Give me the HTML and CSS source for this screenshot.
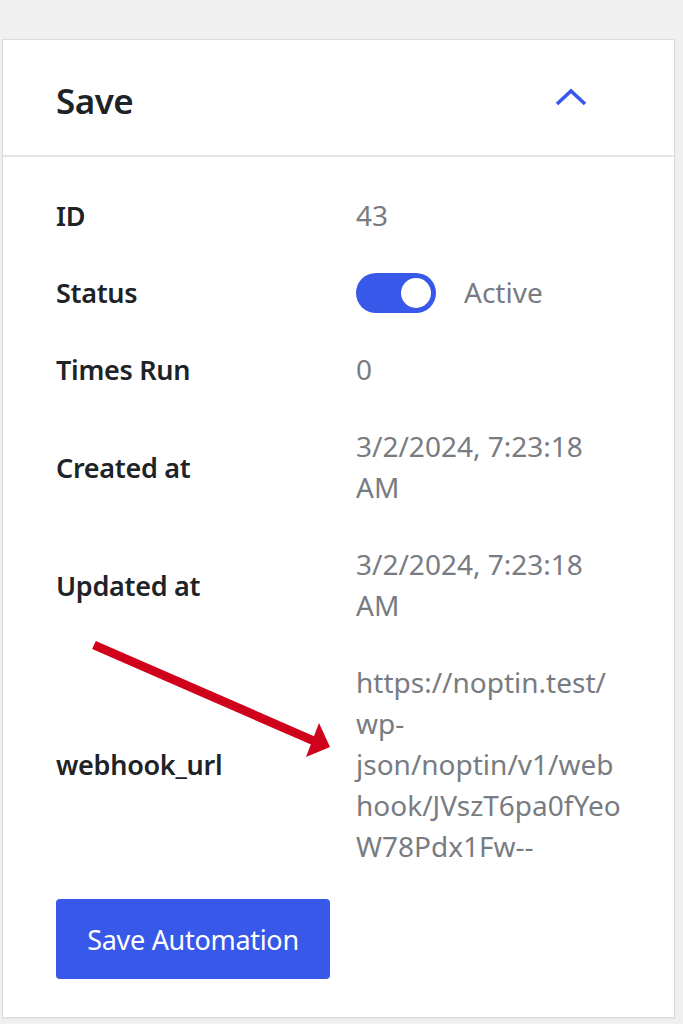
FILE: index.html
```html
<!DOCTYPE html>
<html>
<head>
<meta charset="utf-8">
<link rel="stylesheet" href="styles.css">
</head>
<body>
<div class="card">
  <div class="card-header">
    <h2 class="title">Save</h2>
    <svg class="chevron" width="34" height="22" viewBox="0 0 34 22"><path d="M3 18 L17 5 L31 18" fill="none" stroke="#3858e9" stroke-width="3.6" stroke-linejoin="miter"/></svg>
  </div>
  <div class="card-body">
    <div class="rows">
      <div class="label">ID</div><div class="value">43</div>
      <div class="label">Status</div>
      <div class="value status"><span class="toggle"><span class="knob"></span></span><span>Active</span></div>
      <div class="label">Times Run</div><div class="value">0</div>
      <div class="label">Created at</div><div class="value">3/2/2024, 7:23:18 AM</div>
      <div class="label">Updated at</div><div class="value">3/2/2024, 7:23:18 AM</div>
      <div class="label">webhook_url</div><div class="value url">https://noptin.test/wp-json/noptin/v1/webhook/JVszT6pa0fYeoW78Pdx1Fw--</div>
    </div>
    <button class="save-btn">Save Automation</button>
  </div>
  <svg class="arrow" width="260" height="130" viewBox="0 0 260 130">
    <line x1="2" y1="5" x2="222" y2="101" stroke="#d0021b" stroke-width="9"/>
    <polygon points="227,83 238,107 214,117" fill="#d0021b"/>
  </svg>
</div>
</body>
</html>
```
FILE: styles.css
```css
html, body { margin: 0; padding: 0; }
body {
  background: #f0f0f1;
  font-family: "Noto Sans", "Open Sans", sans-serif;
  width: 683px;
  height: 1024px;
  padding-top: 39px;
  box-sizing: border-box;
}
.card {
  position: relative;
  margin-left: 2px;
  width: 673px;
  box-sizing: border-box;
  background: #fff;
  border: 1px solid #dcdcde;
  box-shadow: 0 1px 2px rgba(0,0,0,0.06);
  height: 979px;
}
.card-header {
  height: 117px;
  box-sizing: border-box;
  border-bottom: 2px solid #e5e5e5;
  display: flex;
  align-items: center;
  justify-content: space-between;
  padding: 5px 86px 0 53px;
}
.title {
  margin: 0;
  font-size: 35px;
  font-weight: 600;
  color: #1d2327;
  letter-spacing: -0.5px;
}
.chevron { display: block; margin-top: -6px; }
.card-body {
  padding: 20px 53px 0 53px;
}
.rows {
  display: grid;
  grid-template-columns: 300px 266px;
  align-items: center;
}
.label, .value {
  padding: 18px 0;
  font-size: 27px;
  line-height: 41px;
}
.label { font-weight: 600; color: #1d2327; letter-spacing: -0.3px; }
.value { color: #787c82; font-size: 28px; }
.url { overflow-wrap: anywhere; }
.status { display: flex; align-items: center; gap: 28px; }
.toggle {
  width: 80px;
  height: 40px;
  border-radius: 20px;
  background: #3858e9;
  position: relative;
  display: inline-block;
}
.knob {
  position: absolute;
  right: 5px;
  top: 5px;
  width: 30px;
  height: 30px;
  border-radius: 50%;
  background: #fff;
}
.save-btn {
  margin-top: 14px;
  width: 274px;
  height: 80px;
  border: 0;
  border-radius: 4px;
  background: #3858e9;
  color: #fff;
  font-family: "Noto Sans", "Open Sans", sans-serif;
  font-size: 27px;
  letter-spacing: -0.3px;
  cursor: pointer;
}
.arrow {
  position: absolute;
  left: 89px;
  top: 600px;
}
```
